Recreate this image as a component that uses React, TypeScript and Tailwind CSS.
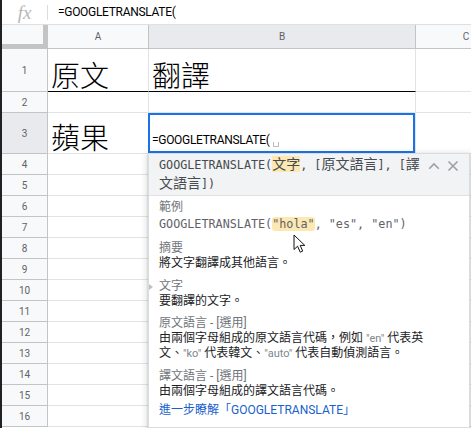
import React from 'react'

const sans = "font-['Roboto','Noto_Sans_CJK_TC',sans-serif]"
const mono = "font-['DejaVu_Sans_Mono','Noto_Sans_CJK_TC',monospace]"
const cjk = "font-['Noto_Sans_CJK_TC',sans-serif]"

type RowDef = {
    num: number
    height: string
    a?: string
    b?: string
    underline?: boolean
    formula?: boolean
    selected?: boolean
}

const rows: RowDef[] = [
    {num: 1, height: 'h-[43px]', a: '原文', b: '翻譯', underline: true},
    {num: 2, height: 'h-[21px]'},
    {num: 3, height: 'h-[41px]', a: '蘋果', formula: true, selected: true},
    ...[4, 5, 6, 7, 8, 9, 10, 11, 12, 13, 14, 15, 16].map((n) => ({num: n, height: 'h-[21px]'})),
]

const ChevronUp = () => (
    <svg width="12" height="8" viewBox="0 0 12 8">
        <path d="M1.2 6.8 L6 2 L10.8 6.8" fill="none" stroke="#9aa0a6" strokeWidth="1.6"/>
    </svg>
)

const CloseIcon = () => (
    <svg width="12" height="12" viewBox="0 0 12 12">
        <path d="M1.5 1.5 L10.5 10.5 M10.5 1.5 L1.5 10.5" fill="none" stroke="#9aa0a6" strokeWidth="1.6"/>
    </svg>
)

// mouse pointer resting over the "hola" example
const Pointer = () => (
    <svg width="13" height="20" viewBox="0 0 13 20" className="absolute left-[144px] top-[38px]">
        <path d="M1 1 L1 15.5 L4.6 12.2 L7.2 18.2 L9.7 17.1 L7.2 11.4 L11.8 11.4 Z" fill="#fff" stroke="#111"
              strokeWidth="1" strokeLinejoin="round"/>
    </svg>
)

const Hint = () => (
    <div className="absolute left-[-1px] top-full z-10 w-[322px] border border-[#dadce0] bg-white shadow-[0_2px_6px_2px_rgba(60,64,67,0.15),0_1px_2px_rgba(60,64,67,0.3)]">
        <div className="flex items-start border-b border-[#e0e0e0] bg-[#f1f3f4] pl-[10px] pr-[10px] pt-[1px] pb-[2px]">
            <div className={`flex-1 ${mono} text-[11.75px] leading-[18px] text-[#474a4e]`}>
                GOOGLETRANSLATE(<span className="bg-[#fce8b2] text-[14px]">文字</span>, [<span
                className="text-[14px]">原文語言</span>], [<span className="text-[14px]">譯</span>
                <br/>
                <span className="text-[14px]">文語言</span>])
            </div>
            <div className="ml-[6px] mt-[5px] flex items-center gap-[7px]">
                <ChevronUp/>
                <CloseIcon/>
            </div>
        </div>

        <div className={`relative px-[10px] pt-[4px] pb-[9px] ${sans} text-[12px] leading-[15px] text-[#202124]`}>
            <div className="text-[#70757a]">範例</div>
            <div className={`${mono} text-[11.75px] leading-[18px] text-[#5f6368]`}>
                GOOGLETRANSLATE(<span className="rounded-[3px] bg-[#fce8b2]">"hola"</span>, "es", "en")
            </div>

            <div className="mt-[8px] text-[#70757a]">摘要</div>
            <div>將文字翻譯成其他語言。</div>

            <div className="relative mt-[8px] text-[#70757a]">
                <span className="absolute left-[-10px] top-[5px] h-0 w-0 border-y-[3px] border-l-[4px] border-y-transparent border-l-[#bdc1c6]"/>
                文字
            </div>
            <div>要翻譯的文字。</div>

            <div className="mt-[7px] text-[#70757a]">原文語言 - [選用]</div>
            <div className="whitespace-nowrap">
                由兩個字母組成的原文語言代碼，例如 <span className="text-[11px] text-[#80868b]">"en"</span> 代表英
                <br/>
                文、<span className="text-[11px] text-[#80868b]">"ko"</span> 代表韓文、<span
                className="text-[11px] text-[#80868b]">"auto"</span> 代表自動偵測語言。
            </div>

            <div className="mt-[8px] text-[#70757a]">譯文語言 - [選用]</div>
            <div>由兩個字母組成的譯文語言代碼。</div>

            <div className="mt-[4px] text-[#1a5fcc]">進一步瞭解「GOOGLETRANSLATE」</div>

            <Pointer/>
        </div>
    </div>
)

export default function App() {
    return (
        <div className={`relative h-[428px] w-[471px] overflow-hidden border-l-2 border-[#202124] bg-white ${sans}`}>
            {/* formula bar */}
            <div className="flex h-[25px] items-center border-b border-[#e0e0e0]">
                <div className="flex w-[45px] justify-center font-['Liberation_Serif',serif] text-[19px] italic leading-none text-[#b7b7b7]">
                    fx
                </div>
                <div className="h-[15px] w-px bg-[#dadce0]"/>
                <div className="pl-[10px] pt-[1px] text-[12px] leading-[15px] tracking-[-0.3px] text-black">
                    =GOOGLETRANSLATE(
                </div>
            </div>

            {/* column headers */}
            <div className="flex h-[24px] text-[10px] text-[#5f6368]">
                <div className="w-[46px] shrink-0 border-b-[5px] border-r-[5px] border-[#c4c4c4] bg-[#f8f9fa]"/>
                <div className="flex w-[101px] shrink-0 items-center justify-center border-b border-r border-[#c4c4c4] bg-[#f8f9fa]">A</div>
                <div className="flex w-[267px] shrink-0 items-center justify-center border-b border-r border-[#c4c4c4] bg-[#e8eaed]">B</div>
                <div className="flex w-[101px] shrink-0 items-center justify-center border-b border-r border-[#c4c4c4] bg-[#f8f9fa]">C</div>
            </div>

            {rows.map((r) => (
                <div key={r.num} className={`flex ${r.height}`}>
                    <div className={`flex w-[46px] shrink-0 items-center justify-center border-b border-r border-[#c4c4c4] text-[10px] text-[#5f6368] ${r.selected ? 'bg-[#e8eaed]' : 'bg-[#f8f9fa]'}`}>
                        {r.num}
                    </div>
                    <div className={`flex w-[101px] shrink-0 items-end border-b border-r pl-[3px] pb-[2px] ${r.underline ? 'border-b-black border-r-[#e2e3e3]' : 'border-[#e2e3e3]'}`}>
                        {r.a && (
                            <span className={`${cjk} text-[29px] font-light leading-none text-black`}>{r.a}</span>
                        )}
                    </div>
                    <div className={`relative flex w-[267px] shrink-0 items-end border-b border-r pl-[3px] ${r.underline ? 'border-b-black border-r-[#e2e3e3]' : 'border-[#e2e3e3]'} ${r.formula ? 'pb-[5px]' : 'pb-[2px]'}`}>
                        {r.b && (
                            <span className={`${cjk} text-[29px] font-light leading-none text-black`}>{r.b}</span>
                        )}
                        {r.formula && (
                            <>
                                <span className="text-[12px] leading-[15px] tracking-[-0.3px] text-black">
                                    =GOOGLETRANSLATE(
                                    <span className="ml-[3px] inline-block h-[5px] w-[6px] border-x border-b border-[#bdbdbd] align-[-3px]"/>
                                </span>
                                <div className="pointer-events-none absolute -left-px top-0 right-0 bottom-0 border-2 border-[#1a73e8]"/>
                                <Hint/>
                            </>
                        )}
                    </div>
                    <div className="w-[101px] shrink-0 border-b border-r border-[#e2e3e3]"/>
                </div>
            ))}
        </div>
    )
}
